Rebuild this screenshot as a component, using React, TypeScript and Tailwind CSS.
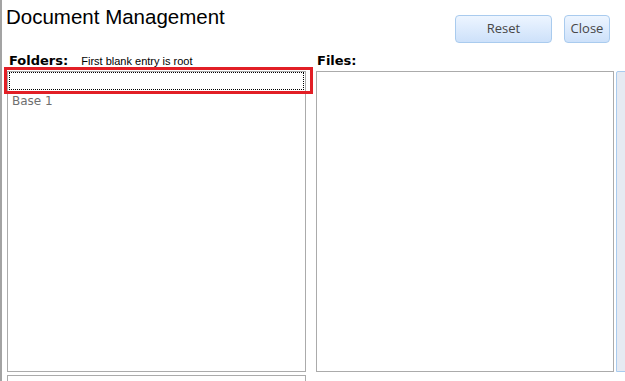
import React from "react";

const labelFont = { fontFamily: '"DejaVu Sans", Verdana, sans-serif' };

const Button = ({ label, width }: { label: string; width: string }) => (
  <button
    type="button"
    className={`${width} h-[28px] rounded-[4px] border border-[#a9cbee] bg-gradient-to-b from-[#edf5ff] to-[#cde1fa] text-[13px] text-[#474747] font-['Open_Sans',sans-serif]`}
  >
    {label}
  </button>
);

export default function App() {
  return (
    <div className="w-[625px] h-[381px] overflow-hidden bg-white border-l-2 border-[#a3a3a3]">
      {/* Header */}
      <div className="flex items-start">
        <h1 className="mt-[5px] ml-[4px] text-[20.5px] leading-[23px] text-black font-['Liberation_Sans',Arial,sans-serif]">
          Document Management
        </h1>
        <div className="ml-auto mt-[15px] mr-[15px] flex gap-[12px]">
          <Button label="Reset" width="w-[97px]" />
          <Button label="Close" width="w-[46px]" />
        </div>
      </div>

      {/* Panels */}
      <div className="mt-[9px] flex">
        {/* Folders */}
        <div className="ml-[5px] w-[299px] shrink-0">
          <div className="flex items-baseline h-[19px] pt-[1px]">
            <span className="ml-[2px] text-[13px] leading-[15px] font-bold text-black" style={labelFont}>
              Folders:
            </span>
            <span className="ml-[13px] text-[11px] text-black font-['Liberation_Sans',Arial,sans-serif]">
              First blank entry is root
            </span>
          </div>
          <div className="relative h-[301px] border border-[#ababab] px-[1px]">
            <div className="h-[18px] border border-dotted border-black" />
            <div
              className="mt-[2px] pl-[3px] text-[12px] leading-[18px] text-[#6f6f6f]"
              style={labelFont}
            >
              Base 1
            </div>
            <div className="absolute left-[-4px] top-[-5px] w-[309px] h-[27px] border-[3px] border-[#e21f26]" />
          </div>
          <div className="mt-[3px] h-[20px] border border-[#ababab]" />
        </div>

        {/* Files */}
        <div className="ml-[10px] w-[298px] shrink-0">
          <div className="flex items-baseline h-[19px] pt-[1px]">
            <span className="ml-[1px] text-[13px] leading-[15px] font-bold text-black" style={labelFont}>
              Files:
            </span>
          </div>
          <div className="h-[301px] border border-[#ababab]" />
        </div>

        {/* Side panel edge */}
        <div className="ml-[2px] mt-[19px] w-[20px] h-[301px] shrink-0 rounded-tl-[2px] border border-[#a9cbee] bg-[#e6eaf2]" />
      </div>
    </div>
  );
}
